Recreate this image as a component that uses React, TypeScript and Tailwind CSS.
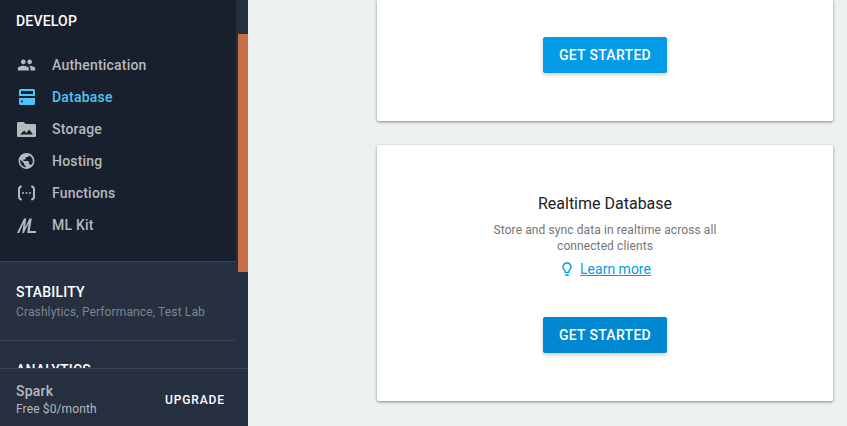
import { MdPeople, MdPublic, MdOutlineLightbulb } from "react-icons/md";

const DatabaseIcon = () => (
  <svg width="16" height="16" viewBox="0 0 16 16" fill="currentColor">
    <path fillRule="evenodd" d="M1.500 0h13A1.500 1.500 0 0 1 16 1.500V7H0V1.500A1.500 1.500 0 0 1 1.500 0ZM2 2v3h12V2H2ZM0 9h16v5.500a1.500 1.500 0 0 1-1.500 1.500h-13A1.500 1.500 0 0 1 0 14.500V9Zm3 2.500a1 1 0 1 0 0 2 1 1 0 0 0 0-2Z" />
    <circle cx="3" cy="5.500" r="0.800" />
  </svg>
);

const StorageIcon = () => (
  <svg width="19" height="15" viewBox="0 1 19 15" fill="currentColor">
    <path fillRule="evenodd" d="M1.600 1h5l2 2h8.800c.9 0 1.600.7 1.600 1.600v9.800c0 .9-.7 1.600-1.600 1.600H1.600C.7 16 0 15.300 0 14.400V2.600C0 1.700.7 1 1.600 1ZM3 13.500h13l-3.800-5-3 3.500-2-2.400L3 13.500Z" />
  </svg>
);

const FunctionsIcon = () => (
  <svg width="19" height="16" viewBox="0 0 19 16" fill="currentColor">
    <path fill="none" stroke="currentColor" strokeWidth="2" strokeLinecap="round" d="M4 1.500C2.500 2 2 3 2 4.500v7c0 1.500.5 2.500 2 3" />
    <path fill="none" stroke="currentColor" strokeWidth="2" strokeLinecap="round" d="M15 1.500c1.500.5 2 1.500 2 3v7c0 1.500-.5 2.500-2 3" />
    <circle cx="6" cy="8" r="1" />
    <circle cx="9.500" cy="8" r="1" />
    <circle cx="13" cy="8" r="1" />
  </svg>
);

const MlKitIcon = () => (
  <svg width="19" height="15" viewBox="0 0 19 15" fill="currentColor">
    <path d="M0 15 7 .5h2.200L8 9.500 12.500.5h2.300L12.700 13H19v2H10.200l1.400-9.500L6.800 15H5.300l1.200-9.800L2.200 15H0Z" />
  </svg>
);

const items = [
  { label: "Authentication", icon: <MdPeople size={22} /> },
  { label: "Database", icon: <DatabaseIcon />, active: true },
  { label: "Storage", icon: <StorageIcon /> },
  { label: "Hosting", icon: <MdPublic size={20} /> },
  { label: "Functions", icon: <FunctionsIcon /> },
  { label: "ML Kit", icon: <MlKitIcon /> },
];

export default function App() {
  return (
    <div className="flex h-[426px] w-[847px] overflow-hidden bg-[#ecf0f1] font-['Roboto',sans-serif]">
      {/* Sidebar */}
      <aside className="relative flex w-[248px] shrink-0 flex-col bg-[#263040]">
        <div className="flex min-h-0 flex-1">
          <div className="min-w-0 flex-1 overflow-hidden">
            <div className="h-[262px] border-b border-[#3b4452] bg-[#17202c]">
              <div className="pl-4 pt-[12px] text-sm font-medium leading-[18px] tracking-[0.2px] text-white">DEVELOP</div>
              <nav className="mt-[19px]">
                {items.map((item) => (
                  <div
                    key={item.label}
                    className={`flex h-8 items-center text-sm font-medium tracking-[0.2px] ${item.active ? "text-[#4fc3f7]" : "text-[#b6b9bd]"}`}
                  >
                    <span className="flex w-9 shrink-0 justify-center pl-[17px]">
                      <span className="flex w-[19px] shrink-0 justify-center">{item.icon}</span>
                    </span>
                    <span className="ml-4">{item.label}</span>
                  </div>
                ))}
              </nav>
            </div>
            <div className="px-4 pt-[21px]">
              <div className="text-sm font-medium leading-[18px] tracking-[0.2px] text-white">STABILITY</div>
              <div className="mt-[3px] text-xs leading-4 tracking-[0.13px] text-[#7d8590]">Crashlytics, Performance, Test Lab</div>
            </div>
            <div className="mt-[20px] h-px bg-[#3b4452]" />
            <div className="px-4 pt-[20px] text-sm font-medium leading-[18px] tracking-[0.2px] text-white">ANALYTICS</div>
          </div>
          <div className="w-3 shrink-0 pl-0.5">
            <div className="mt-[34px] h-[238px] bg-[#c96f47]" />
          </div>
        </div>
        <footer className="flex h-[58px] shrink-0 items-center justify-between border-t border-[#3b4452] bg-[#263040] pl-4 pr-[23px] pt-1">
          <div>
            <div className="text-sm font-medium leading-[18px] tracking-[0.2px] text-[#b6b9bd]">Spark</div>
            <div className="mt-[1px] text-xs leading-4 tracking-[0.13px] text-[#b6b9bd]">Free $0/month</div>
          </div>
          <div className="text-xs font-medium tracking-[0.9px] text-white">UPGRADE</div>
        </footer>
      </aside>

      {/* Main */}
      <main className="flex flex-1 flex-col items-start gap-6 pl-[129px]">
        <section className="flex h-[121px] w-[456px] shrink-0 items-start justify-center rounded-b-[2px] bg-white pt-[37px] shadow-[0_1px_3px_rgba(0,0,0,0.45)]">
          <button className="h-9 w-[124px] rounded-[2px] bg-[#039be5] text-sm font-medium tracking-[0.3px] text-white shadow-[0_2px_4px_rgba(0,0,0,0.2)]">
            GET STARTED
          </button>
        </section>
        <section className="flex h-[256px] w-[456px] shrink-0 flex-col items-center rounded-[2px] bg-white pt-[49px] shadow-[0_1px_3px_rgba(0,0,0,0.45)]">
          <h2 className="text-base leading-5 text-[#212121]">Realtime Database</h2>
          <p className="mt-[8px] w-[240px] text-center text-xs leading-4 tracking-[0.1px] text-[#757575]">
            Store and sync data in realtime across all connected clients
          </p>
          <a className="mt-[6px] flex items-center gap-[5px] text-sm leading-[18px] text-[#039be5]">
            <MdOutlineLightbulb size={16} />
            <span className="underline">Learn more</span>
          </a>
          <button className="mt-[39px] h-9 w-[124px] rounded-[2px] bg-[#0288d1] text-sm font-medium tracking-[0.3px] text-white shadow-[0_2px_4px_rgba(0,0,0,0.2)]">
            GET STARTED
          </button>
        </section>
      </main>
    </div>
  );
}
